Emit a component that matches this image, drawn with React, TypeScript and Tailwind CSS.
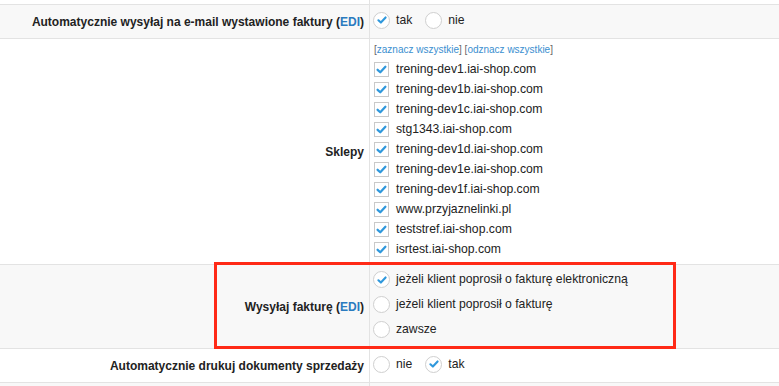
import React from 'react'

const shops = [
  'trening-dev1.iai-shop.com',
  'trening-dev1b.iai-shop.com',
  'trening-dev1c.iai-shop.com',
  'stg1343.iai-shop.com',
  'trening-dev1d.iai-shop.com',
  'trening-dev1e.iai-shop.com',
  'trening-dev1f.iai-shop.com',
  'www.przyjaznelinki.pl',
  'teststref.iai-shop.com',
  'isrtest.iai-shop.com',
]

const Check = ({ className }: { className: string }) => (
  <svg viewBox="0 0 16 16" className={className}>
    <path d="M3.2 8.4 L6.5 11.4 L12.8 4.6" fill="none" stroke="#2f98dc" strokeWidth="2.8" strokeLinecap="round" strokeLinejoin="round" />
  </svg>
)

const Radio = ({ checked, label }: { checked?: boolean; label: string }) => (
  <label className="flex items-center gap-[6px] leading-[17px]">
    <span className="w-[17px] h-[17px] rounded-full border border-[#cfcfcf] bg-white flex items-center justify-center shrink-0">
      {checked && <Check className="w-[12px] h-[12px]" />}
    </span>
    <span>{label}</span>
  </label>
)

const Box = ({ label }: { label: string }) => (
  <label className="flex items-center gap-[7px] h-[20px]">
    <span className="w-[15px] h-[15px] border border-[#c9c9c9] bg-white flex items-center justify-center shrink-0">
      <Check className="w-[13px] h-[13px]" />
    </span>
    <span>{label}</span>
  </label>
)

const Label = ({ children }: { children: React.ReactNode }) => (
  <div className="w-[370px] shrink-0 border-r border-[#e3e3e3] flex items-center justify-end pr-[5px] font-bold text-[12px]">
    {children}
  </div>
)

const Edi = () => (
  <>
    (<span className="text-[#2b7bbf]">EDI</span>)
  </>
)

export default function App() {
  return (
    <div
      className="w-[779px] h-[386px] overflow-hidden bg-[#f8f8f8] text-[12.2px] text-[#222]"
      style={{ fontFamily: '"Liberation Sans", Arial, sans-serif' }}
    >
      <div className="flex h-[5px] bg-white border-b border-[#e3e3e3]">
        <div className="w-[370px] border-r border-[#e3e3e3]" />
      </div>

      <div className="flex h-[34px] bg-[#f8f8f8] border-b border-[#e3e3e3]">
        <Label>
          <span>
            Automatycznie wysyłaj na e-mail wystawione faktury <Edi />
          </span>
        </Label>
        <div className="flex items-center gap-[13px] pl-[3px] pb-[3px]">
          <Radio checked label="tak" />
          <Radio label="nie" />
        </div>
      </div>

      <div className="flex h-[226px] bg-white border-b border-[#e3e3e3]">
        <Label>Sklepy</Label>
        <div className="flex flex-col pl-[4px] pt-[4px]">
          <div className="text-[10px] text-[#666] h-[16px] leading-[14px]">
            [<span className="text-[#3a8fd0]">zaznacz wszystkie</span>] [
            <span className="text-[#3a8fd0]">odznacz wszystkie</span>]
          </div>
          {shops.map((s) => (
            <Box key={s} label={s} />
          ))}
        </div>
      </div>

      <div className="relative flex h-[84px] bg-[#f8f8f8] border-b border-[#e3e3e3]">
        <Label>
          <span>
            Wysyłaj fakturę <Edi />
          </span>
        </Label>
        <div className="flex flex-col gap-[8px] pl-[3px] pt-[6px]">
          <Radio checked label="jeżeli klient poprosił o fakturę elektroniczną" />
          <Radio label="jeżeli klient poprosił o fakturę" />
          <Radio label="zawsze" />
        </div>
        <div className="absolute left-[214px] top-[-3px] w-[462px] h-[87px] border-[3px] border-[#ff2a17] pointer-events-none" />
      </div>

      <div className="flex h-[34px] bg-white border-b border-[#e3e3e3]">
        <Label>Automatycznie drukuj dokumenty sprzedaży</Label>
        <div className="flex items-center gap-[13px] pl-[3px] pb-[3px]">
          <Radio label="nie" />
          <Radio checked label="tak" />
        </div>
      </div>

      <div className="flex h-[10px]">
        <div className="w-[370px] border-r border-[#e3e3e3]" />
      </div>
    </div>
  )
}
